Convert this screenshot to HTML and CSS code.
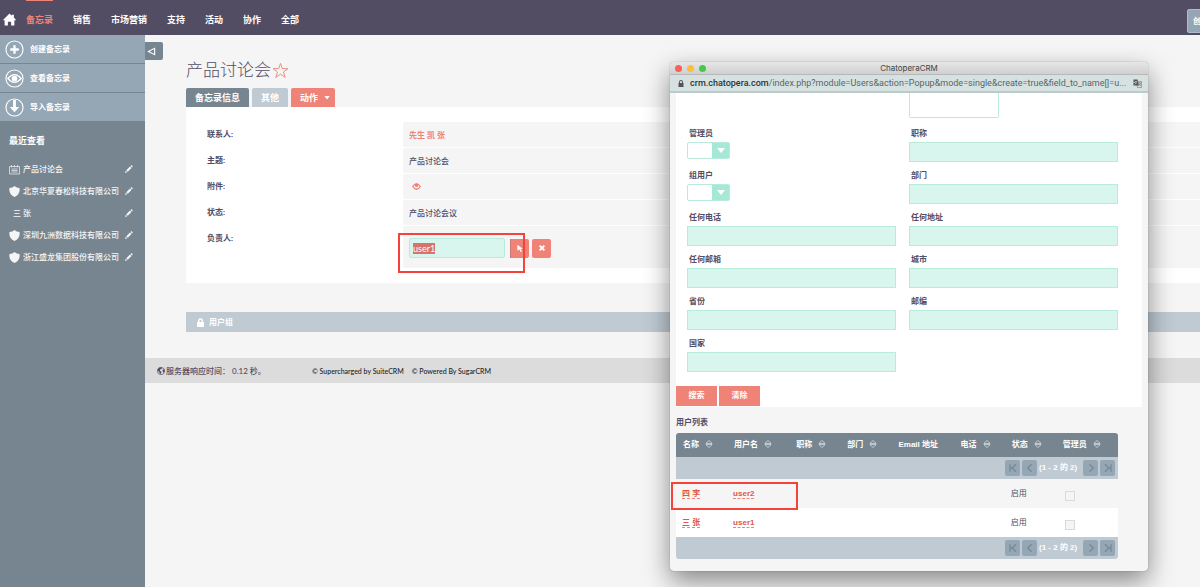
FILE: index.html
```html
<!DOCTYPE html>
<html lang="zh-CN">
<head>
<meta charset="utf-8">
<title>产品讨论会</title>
<link rel="stylesheet" href="styles.css">
</head>
<body>
<svg class="defs" aria-hidden="true">
  <symbol id="i-pencil" viewBox="0 0 16 16"><path fill="currentColor" d="M0 16l1.500-4.500 3 3zM2.500 10.500l7.500-7.500 3 3-7.500 7.500zM11 2l1.300-1.300q.6-.5 1.200 0l1.800 1.800q.5.600 0 1.200L14 5z"/></symbol>
  <symbol id="i-shield" viewBox="0 0 22 22"><path fill="currentColor" d="M11 0q4 4 10 4 2 13-10 18Q-1 17 1 4q6 0 10-4z"/></symbol>
  <symbol id="i-sort" viewBox="0 0 14 14"><path fill="none" stroke="currentColor" stroke-width="1.200" d="M7 .8L12.500 6h-11zM7 13.200L12.500 8h-11z"/></symbol>
  <symbol id="i-first" viewBox="0 0 16 16"><path fill="none" stroke="currentColor" stroke-width="1.800" d="M4 3v10M12 3L7 8l5 5M4 8h3"/></symbol>
  <symbol id="i-prev" viewBox="0 0 16 16"><path fill="none" stroke="currentColor" stroke-width="1.800" d="M10 3L5 8l5 5"/></symbol>
  <symbol id="i-next" viewBox="0 0 16 16"><path fill="none" stroke="currentColor" stroke-width="1.800" d="M6 3l5 5-5 5"/></symbol>
  <symbol id="i-last" viewBox="0 0 16 16"><path fill="none" stroke="currentColor" stroke-width="1.800" d="M12 3v10M4 3l5 5-5 5M9 8h3"/></symbol>
</svg>

<header class="topbar">
  <a href="#" class="home" aria-label="首页"><svg viewBox="0 0 24 24"><path fill="#fff" d="M12 1l4 4V3h4v5.500l4 4.200-2 1.300-1-1v10h-6v-7H9v7H3V13l-1 1-2-1.300z"/></svg></a>
  <nav class="menu">
    <a href="#" class="active">备忘录</a>
    <a href="#">销售</a>
    <a href="#">市场营销</a>
    <a href="#">支持</a>
    <a href="#">活动</a>
    <a href="#">协作</a>
    <a href="#">全部</a>
  </nav>
  <button type="button" class="create">创建</button>
</header>

<div class="layout">
  <aside class="sidebar">
    <nav class="actions">
      <a href="#"><svg viewBox="0 0 20 20"><circle cx="10" cy="10" r="9" fill="none" stroke="#fff" stroke-width="1.200"/><path stroke="#fff" stroke-width="2.400" d="M10 5.500v9M5.500 10h9"/></svg>创建备忘录</a>
      <a href="#"><svg viewBox="0 0 20 20"><circle cx="10" cy="10" r="9" fill="none" stroke="#fff" stroke-width="1.200"/><path fill="none" stroke="#fff" stroke-width="1.300" d="M3 10q7-8 14 0-7 8-14 0z"/><circle cx="10" cy="10" r="3" fill="#fff"/></svg>查看备忘录</a>
      <a href="#"><svg viewBox="0 0 20 20"><circle cx="10" cy="10" r="9" fill="none" stroke="#fff" stroke-width="1.200"/><path fill="#fff" d="M8.500 2h3v7.500h3.500L10 15 5 9.500h3.500z"/></svg>导入备忘录</a>
    </nav>
    <section class="recent">
      <h2>最近查看</h2>
      <ul>
        <li><svg class="kind" viewBox="0 0 22 22"><path fill="none" stroke="#e8ebed" stroke-width="1.500" d="M1 5h20v15H1zM5 2v5M11 2v5M17 2v5M5 10h12M5 13h12M5 16h12"/></svg><a href="#">产品讨论会</a><a href="#" class="edit" aria-label="编辑"><svg><use href="#i-pencil"/></svg></a></li>
        <li><svg class="kind"><use href="#i-shield"/></svg><a href="#">北京华夏春松科技有限公司</a><a href="#" class="edit" aria-label="编辑"><svg><use href="#i-pencil"/></svg></a></li>
        <li class="plain"><a href="#">三 张</a><a href="#" class="edit" aria-label="编辑"><svg><use href="#i-pencil"/></svg></a></li>
        <li><svg class="kind"><use href="#i-shield"/></svg><a href="#">深圳九洲数据科技有限公司</a><a href="#" class="edit" aria-label="编辑"><svg><use href="#i-pencil"/></svg></a></li>
        <li><svg class="kind"><use href="#i-shield"/></svg><a href="#">浙江盛龙集团股份有限公司</a><a href="#" class="edit" aria-label="编辑"><svg><use href="#i-pencil"/></svg></a></li>
      </ul>
    </section>
  </aside>

  <main class="main">
    <button type="button" class="toggle" aria-label="收起侧栏"><svg viewBox="0 0 10 10"><path fill="none" stroke="#fff" stroke-width="1.200" d="M1.500 5L8.500 1.500v7z"/></svg></button>
    <div class="content">
      <h1>产品讨论会<svg viewBox="0 0 24 24"><path fill="none" stroke="#f08377" stroke-width="1.300" d="M12 2l2.600 7.400h7.900l-6.300 4.700 2.400 7.700L12 17.200l-6.600 4.600 2.400-7.700L1.500 9.400h7.900z"/></svg></h1>
      <div class="tabs">
        <button type="button" class="tab current">备忘录信息</button>
        <button type="button" class="tab">其他</button>
        <button type="button" class="tab act">动作<i class="caret"></i></button>
      </div>
      <dl class="detail">
        <dt>联系人:</dt><dd><a href="#">先生 凯 张</a></dd>
        <dt>主题:</dt><dd>产品讨论会</dd>
        <dt>附件:</dt><dd><a href="#" class="eye" aria-label="查看附件"><svg viewBox="0 0 18 14"><path fill="currentColor" fill-rule="evenodd" d="M0 7q9-14 18 0-9 14-18 0zm3 0q2 4 6 4t6-4q-1-2-3-3 1 4-3 4T6 4Q4 5 3 7z"/></svg></a></dd>
        <dt>状态:</dt><dd>产品讨论会议</dd>
        <dt><label for="owner">负责人:</label></dt>
        <dd class="owner">
          <input id="owner" type="text" value="user1">
          <button type="button" class="pick" aria-label="选择"><svg viewBox="0 0 12 12"><path fill="#fff" d="M2 1l8 6-3 .5 2 4-2 .5-2-4-3 2z"/></svg></button>
          <button type="button" aria-label="清除"><svg viewBox="0 0 12 12"><path stroke="#fff" stroke-width="3" d="M2.500 2.500l7 7M9.500 2.500l-7 7"/></svg></button>
          <span class="mark"></span>
        </dd>
      </dl>
      <button type="button" class="group"><svg viewBox="0 0 14 18"><path fill="#fff" d="M0 8h2V5.500a5 5 0 0 1 10 0V8h2v10H0zm5 0h4V5.500a2 2 0 0 0-4 0z"/></svg>用户组</button>
    </div>
    <footer class="footer">
      <span class="time"><svg viewBox="0 0 16 16"><circle cx="8" cy="8" r="7.200" fill="none" stroke="currentColor" stroke-width="1.400"/><path fill="currentColor" d="M1 5l4-4 5 0-1 3-3 1 0 3 3 1-1 4-2 1-2-5-3-2zM11 5l4 0v5l-3 1z"/></svg>服务器响应时间： 0.12 秒。</span>
      <a href="#">© Supercharged by SuiteCRM</a>
      <a href="#">© Powered By SugarCRM</a>
    </footer>
  </main>
</div>

<section class="popup" aria-label="ChatoperaCRM">
  <div class="titlebar"><i class="dot red"></i><i class="dot amber"></i><i class="dot green"></i><span>ChatoperaCRM</span></div>
  <div class="address">
    <svg viewBox="0 0 12 14"><path fill="#555" d="M1 6h1V4a4 4 0 0 1 8 0v2h1v8H1zm3 0h4V4a2 2 0 0 0-4 0z"/></svg>
    <span class="url"><b>crm.chatopera.com</b>/index.php?module=Users&amp;action=Popup&amp;mode=single&amp;create=true&amp;field_to_name[]=u...</span>
    <svg class="translate" viewBox="0 0 18 18"><path fill="#ddd" stroke="#666" d="M7 5h10v12H9z"/><path fill="#555" d="M1 1h8l3 12H1z"/><path fill="none" stroke="#fff" stroke-width="1.200" d="M8 5H5a2 2 0 1 0 2 3H5"/><path fill="none" stroke="#555" d="M11 8h5M13.500 7v1M15 8q-1 4-3 5M12.500 10l3 4"/></svg>
  </div>
  <div class="page">
    <form class="search">
      <div class="fields">
        <div class="field right"><textarea class="tall" aria-label="描述"></textarea></div>
        <div class="field"><label for="f1">管理员</label><span class="drop"><select id="f1"><option></option></select><i class="caret"></i></span></div>
        <div class="field"><label for="f2">职称</label><input id="f2" type="text"></div>
        <div class="field"><label for="f3">组用户</label><span class="drop"><select id="f3"><option></option></select><i class="caret"></i></span></div>
        <div class="field"><label for="f4">部门</label><input id="f4" type="text"></div>
        <div class="field"><label for="f5">任何电话</label><input id="f5" type="text"></div>
        <div class="field"><label for="f6">任何地址</label><input id="f6" type="text"></div>
        <div class="field"><label for="f7">任何邮箱</label><input id="f7" type="text"></div>
        <div class="field"><label for="f8">城市</label><input id="f8" type="text"></div>
        <div class="field"><label for="f9">省份</label><input id="f9" type="text"></div>
        <div class="field"><label for="f10">邮编</label><input id="f10" type="text"></div>
        <div class="field"><label for="f11">国家</label><input id="f11" type="text"></div>
      </div>
      <div class="buttons"><button type="button">搜索</button><button type="button">清除</button></div>
    </form>
    <h3>用户列表</h3>
    <table class="users">
      <colgroup><col class="c-s"><col class="c-l"><col class="c-s"><col class="c-s"><col class="c-l"><col class="c-s"><col class="c-s"><col class="c-l"></colgroup>
      <thead>
        <tr class="head"><th>名称<svg><use href="#i-sort"/></svg></th><th>用户名<svg><use href="#i-sort"/></svg></th><th>职称<svg><use href="#i-sort"/></svg></th><th>部门<svg><use href="#i-sort"/></svg></th><th>Email 地址</th><th>电话<svg><use href="#i-sort"/></svg></th><th>状态<svg><use href="#i-sort"/></svg></th><th>管理员<svg><use href="#i-sort"/></svg></th></tr>
      </thead>
      <tbody>
        <tr class="pager"><td colspan="8"><div><button type="button" aria-label="首页"><svg><use href="#i-first"/></svg></button><button type="button" aria-label="上一页"><svg><use href="#i-prev"/></svg></button><span>(1 - 2 的 2)</span><button type="button" aria-label="下一页"><svg><use href="#i-next"/></svg></button><button type="button" aria-label="末页"><svg><use href="#i-last"/></svg></button></div></td></tr>
        <tr class="row odd"><td><a href="#">四 李</a></td><td><a href="#">user2</a></td><td></td><td></td><td></td><td></td><td>启用</td><td><input type="checkbox" aria-label="user2 管理员" disabled></td></tr>
        <tr class="row"><td><a href="#">三 张</a></td><td><a href="#">user1</a></td><td></td><td></td><td></td><td></td><td>启用</td><td><input type="checkbox" aria-label="user1 管理员" disabled></td></tr>
        <tr class="pager"><td colspan="8"><div><button type="button" aria-label="首页"><svg><use href="#i-first"/></svg></button><button type="button" aria-label="上一页"><svg><use href="#i-prev"/></svg></button><span>(1 - 2 的 2)</span><button type="button" aria-label="下一页"><svg><use href="#i-next"/></svg></button><button type="button" aria-label="末页"><svg><use href="#i-last"/></svg></button></div></td></tr>
      </tbody>
    </table>
  </div>
  <span class="mark"></span>
</section>
<script src="main.js"></script>
</body>
</html>
```

FILE: main.js
```js
document.getElementById("owner").select();
```

FILE: styles.css
```css
* { box-sizing: border-box; }
body {
  margin: 0;
  min-height: 100vh;
  display: flex;
  flex-direction: column;
  position: relative;
  overflow: hidden;
  background: #f5f5f5;
  color: #534d64;
  font: 8px/12px Lato, "Noto Sans CJK SC", sans-serif;
}
a { color: inherit; text-decoration: none; }
button, input, select, textarea { font: inherit; color: inherit; margin: 0; padding: 0; border: 0; }
svg { display: block; flex: none; }
.defs { position: absolute; width: 0; height: 0; }
h1, h2, h3, ul, dl, dd { margin: 0; padding: 0; }
.caret { width: 6px; height: 4px; background: #fff; clip-path: polygon(0 0, 100% 0, 50% 100%); }

.topbar {
  display: flex;
  height: 35px;
  padding-left: 3px;
  background: #534d64;
  color: #fff;
}
.home { align-self: center; margin-top: 3px; }
.home svg { width: 13px; height: 13px; }
.menu { display: flex; gap: 20px; margin-left: 10px; font-size: 9px; font-weight: 700; }
.menu a { padding-top: 13px; border-top: 1px solid transparent; }
.menu .active { color: #f08377; border-color: #f08377; }
.create {
  width: 40px;
  height: 24px;
  margin: 9px -27px 0 auto;
  padding-left: 5px;
  text-align: left;
  background: #94a6b5;
  border: 1px solid #b0bdc8;
  border-radius: 2px;
  color: #fff;
  font-weight: 700;
}

.layout { flex: 1; display: flex; }
.sidebar { width: 145px; flex: none; background: #778590; color: #fff; }
.actions a {
  display: flex;
  align-items: center;
  gap: 6px;
  height: 29px;
  padding: 0 5px;
  background: #95a6b4;
  border-bottom: 1px solid #778590;
  font-weight: 700;
}
.actions svg { width: 19px; height: 19px; }
.recent { padding: 13px 12px 0 9px; }
.recent h2 { font-size: 9px; line-height: 12px; margin-bottom: 11px; }
.recent ul { list-style: none; }
.recent li { display: flex; align-items: center; gap: 3px; height: 22px; color: #f5f5f5; font-weight: 500; }
.recent .plain { padding-left: 4px; }
.kind { width: 11px; height: 11px; }
.edit { margin-left: auto; }
.edit svg { width: 8px; height: 8px; }

.main { flex: 1; min-width: 0; }
.toggle {
  display: flex;
  align-items: center;
  width: 18px;
  height: 18px;
  margin-top: 7px;
  padding-left: 2px;
  background: #778590;
  border-radius: 0 2px 2px 0;
}
.toggle svg { width: 9px; height: 9px; }
.content { padding-left: 41px; }
h1 { display: flex; align-items: center; gap: 1px; height: 20px; font-size: 17px; font-weight: 300; line-height: 20px; }
h1 svg { width: 17px; height: 17px; }
.tabs { display: flex; gap: 3px; margin-top: 8px; }
.tab {
  display: flex;
  align-items: center;
  gap: 6px;
  height: 19px;
  padding: 0 9px;
  background: #bfcad3;
  color: #fff;
  border-radius: 2px 2px 0 0;
  font-size: 9px;
  font-weight: 700;
}
.tab.current { background: #778590; }
.tab.act { background: #f08377; padding-right: 5px; }

.detail { display: grid; grid-template-columns: 196px 1fr; row-gap: 1px; padding: 15px 0 15px 21px; background: #fff; }
.detail dt { padding-top: 6px; font-weight: 700; }
.detail dd {
  display: flex;
  align-items: center;
  height: 25px;
  padding-left: 6px;
  background: #f5f5f5;
  border-radius: 2px 0 0 2px;
  font-weight: 500;
}
.detail dd a { color: #f08377; font-weight: 700; }
.eye { margin-left: 3px; }
.eye svg { width: 9px; height: 7px; }
.detail .owner { position: relative; height: 42px; gap: 3px; padding-top: 2px; }
.owner input {
  width: 96px;
  height: 20px;
  margin-right: 2px;
  padding-left: 3px;
  background: #d8f5ee;
  border: 1px solid #b9ebdd;
  border-radius: 2px;
  outline: 0;
  font-size: 9px;
  font-weight: 400;
}
.owner input::selection { background: #d5736c; color: #fff; }
.owner button { display: grid; place-items: center; width: 19px; height: 19px; background: #f08377; border-radius: 2px; }
.owner svg { width: 8px; height: 8px; }
.owner .pick { border-left: 1px solid #c97a75; border-radius: 0 2px 2px 0; }
.mark { position: absolute; border: 2px solid #f5423b; }
.owner .mark { left: -5px; top: 7px; width: 127px; height: 40px; }

.group {
  display: flex;
  align-items: center;
  gap: 5px;
  width: 100%;
  height: 20px;
  margin-top: 29px;
  padding-left: 11px;
  background: #bfcad3;
  color: #fff;
  font-weight: 700;
}
.group svg { width: 7px; height: 9px; }
.footer { display: flex; align-items: center; gap: 8px; height: 25px; margin-top: 26px; padding-left: 12px; background: #dcdcdc; color: #222; font-size: 7px; font-weight: 500; }
.time { display: flex; align-items: center; gap: 1px; width: 147px; color: #534d64; font-size: 8px; }
.time svg { width: 8px; height: 8px; }

.popup {
  position: absolute;
  left: 670px;
  top: 62px;
  width: 478px;
  background: #f5f5f5;
  border-radius: 4px;
  box-shadow: 0 0 1px rgba(0, 0, 0, .5), 0 10px 26px rgba(0, 0, 0, .45);
  font-family: "Liberation Sans", "Noto Sans CJK SC", sans-serif;
}
.titlebar {
  position: relative;
  display: flex;
  align-items: center;
  gap: 5px;
  height: 13px;
  padding-left: 5px;
  background: linear-gradient(#e6e6e6, #d0d0d0);
  border-bottom: 1px solid #b8b8b8;
  border-radius: 4px 4px 0 0;
  color: #444;
}
.titlebar span { flex: 1; padding-right: 41px; text-align: center; font-family: Inter, sans-serif; }
.dot { width: 7px; height: 7px; border-radius: 50%; }
.red { background: #fb5f57; }
.amber { background: #fbbe3e; }
.green { background: #48c84a; }
.address {
  display: flex;
  align-items: center;
  gap: 6px;
  height: 18px;
  padding: 0 6px 0 8px;
  background: #d5e2e1;
  border-bottom: 2px solid #bccac9;
  font-family: Roboto, sans-serif;
  font-size: 9px;
  color: #5b6466;
}
.address svg { width: 6px; height: 7px; }
.address .translate { width: 9px; height: 9px; }
.url { flex: 1; min-width: 0; white-space: nowrap; }
.url b { font-weight: 500; color: #2d3436; }

.page { padding: 0 6px 12px; }
.search { background: #fff; padding-bottom: 1px; }
.fields { display: grid; grid-template-columns: 209px 209px; column-gap: 13px; padding-left: 11px; }
.field { display: flex; flex-direction: column; align-items: flex-start; height: 42px; padding-top: 3px; }
.field.right { grid-column: 2; height: 32px; padding: 0; }
.field label { padding: 0 0 2px 2px; line-height: 12px; font-weight: 700; }
.field input { width: 100%; height: 20px; background: #d8f5ee; border: 1px solid #b9ebdd; }
.tall { width: 90px; height: 25px; border: 1px solid #b9ebdd; border-top: 0; border-radius: 0 0 2px 2px; resize: none; }
.drop { display: grid; grid-template-columns: 25px 18px; align-items: center; justify-items: center; }
.drop > * { grid-row: 1; }
.drop select {
  grid-column: 1 / 3;
  width: 43px;
  height: 17px;
  appearance: none;
  background: linear-gradient(90deg, #fff 24px, #a5e8d6 24px);
  border: 1px solid #b9ebdd;
  border-radius: 2px;
}
.drop .caret { grid-column: 2; width: 8px; height: 5px; pointer-events: none; z-index: 1; }
.buttons { display: flex; gap: 2px; padding-top: 9px; }
.buttons button { width: 41px; height: 20px; background: #f08377; color: #fff; font-weight: 700; }
h3 { padding: 10px 0 4px; font-size: 8px; line-height: 12px; }

.users { width: 442px; table-layout: fixed; border-collapse: collapse; border-radius: 3px; overflow: hidden; }
.c-s { width: 51px; }
.c-l { width: 62px; }
.users th, .users td { padding: 0 0 0 7px; text-align: left; white-space: nowrap; }
.head { height: 24px; background: #778590; color: #fff; }
.head svg { display: inline-block; width: 8px; height: 8px; margin-left: 6px; vertical-align: -1px; color: #e4e8eb; }
.pager { height: 22px; background: #bfcad3; color: #fff; font-weight: 700; }
.pager div { display: flex; justify-content: flex-end; gap: 2px; padding-right: 3px; line-height: 16px; }
.pager span { width: 42px; }
.pager button { display: grid; place-items: center; width: 15px; height: 16px; background: #95a6b4; border-radius: 2px; color: #778a98; }
.pager button svg { width: 12px; height: 12px; }
.row { height: 29px; background: #fff; }
.row.odd { background: #f5f5f5; }
.users .row td { padding-left: 6px; }
.row a { color: #e0564c; font-weight: 700; border-bottom: 1px dashed #f08377; }
.row input { display: block; appearance: none; width: 10px; height: 10px; margin: 4px 0 0 3px; background: #f5f5f5; border: 1px solid #d5dce0; }
.popup > .mark { left: 1px; top: 420px; width: 127px; height: 28px; }
```
